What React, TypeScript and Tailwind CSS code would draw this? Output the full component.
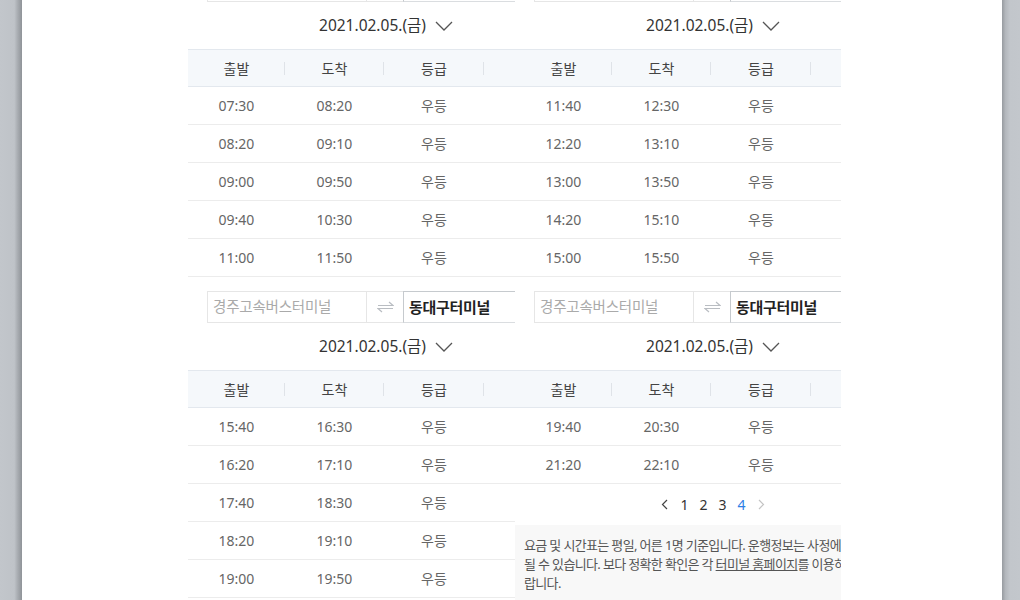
import React from 'react';

type Row = [string, string, string];

interface Section {
  rows: Row[];
  footer?: boolean;
}

const leftSections: Section[] = [
  {
    rows: [
      ['07:30', '08:20', '우등'],
      ['08:20', '09:10', '우등'],
      ['09:00', '09:50', '우등'],
      ['09:40', '10:30', '우등'],
      ['11:00', '11:50', '우등'],
    ],
  },
  {
    rows: [
      ['15:40', '16:30', '우등'],
      ['16:20', '17:10', '우등'],
      ['17:40', '18:30', '우등'],
      ['18:20', '19:10', '우등'],
      ['19:00', '19:50', '우등'],
    ],
  },
];

const rightSections: Section[] = [
  {
    rows: [
      ['11:40', '12:30', '우등'],
      ['12:20', '13:10', '우등'],
      ['13:00', '13:50', '우등'],
      ['14:20', '15:10', '우등'],
      ['15:00', '15:50', '우등'],
    ],
  },
  {
    rows: [
      ['19:40', '20:30', '우등'],
      ['21:20', '22:10', '우등'],
    ],
    footer: true,
  },
];

function SwapIcon() {
  return (
    <svg width="17" height="12" viewBox="0 0 17 12" fill="none" stroke="#b9bdc2" strokeWidth="1.2">
      <path d="M1 4.5h15l-4-3.5" />
      <path d="M16 7.5H1l4 3.5" />
    </svg>
  );
}

function Chevron() {
  return (
    <svg width="18" height="10" viewBox="0 0 18 10" fill="none" stroke="#555" strokeWidth="1.3">
      <path d="M1 1l8 8 8-8" />
    </svg>
  );
}

function SearchRow() {
  return (
    <div className="flex h-[32px] px-[19px]">
      <div className="w-[160px] border border-[#e6e6e6] flex items-center pl-[5px] text-[14.5px] tracking-[-0.2px] text-[#aaaaaa]">
        경주고속버스터미널
      </div>
      <div className="w-[36px] border-y border-[#e6e6e6] flex items-center justify-center">
        <SwapIcon />
      </div>
      <div className="flex-1 border border-[#c6cace] border-b-[#dadde0] flex items-center pl-[5px] text-[15px] tracking-[-0.3px] font-bold text-[#222]">
        동대구터미널
      </div>
    </div>
  );
}

const cols = 'grid grid-cols-[97px_99px_100px_100px]';

function Timetable({ section }: { section: Section }) {
  return (
    <div className="mt-[14px] first:mt-0">
      <SearchRow />
      <div className="h-[47px] flex items-center justify-center gap-[9px]">
        <span className="text-[15.5px] text-[#333]">2021.02.05.(금)</span>
        <Chevron />
      </div>
      <div className={`${cols} h-[38px] bg-[#f5f8fb] border-y border-[#e3e8ee] text-[14px] text-[#444]`}>
        {['출발', '도착', '등급', '요금'].map((h) => (
          <div key={h} className="relative flex items-center justify-center">
            {h}
            <span className="absolute right-0 top-[12px] h-[13px] w-px bg-[#dfe3e8]" />
          </div>
        ))}
      </div>
      {section.rows.map((r, i) => (
        <div key={i} className={`${cols} h-[38px] border-b border-[#ececec] text-[14px] text-[#666]`}>
          <div className="flex items-center justify-center">{r[0]}</div>
          <div className="flex items-center justify-center">{r[1]}</div>
          <div className="flex items-center justify-center">{r[2]}</div>
          <div />
        </div>
      ))}
      {section.footer && (
        <>
          <div className="h-[41px] flex items-center justify-center gap-[11px] text-[14px] text-[#333]">
            <svg width="8" height="11" viewBox="0 0 8 11" fill="none" stroke="#444" strokeWidth="1.2">
              <path d="M6 1L1.5 5.5 6 10" />
            </svg>
            <span>1</span>
            <span>2</span>
            <span>3</span>
            <span className="text-[#2e7fe6]">4</span>
            <svg width="8" height="11" viewBox="0 0 8 11" fill="none" stroke="#c4c4c4" strokeWidth="1.2">
              <path d="M2 1l4.5 4.5L2 10" />
            </svg>
          </div>
          <div className="bg-[#f8f8f8] px-[9px] pt-[11px] pb-[12px] text-[13px] tracking-[-0.65px] leading-[19px] text-[#555] whitespace-nowrap">
            <div>요금 및 시간표는 평일, 어른 1명 기준입니다. 운행정보는 사정에 따라 변경</div>
            <div>
              될 수 있습니다. 보다 정확한 확인은 각 <span className="underline">터미널 홈페이지</span>를 이용하시기 바
            </div>
            <div>랍니다.</div>
          </div>
        </>
      )}
    </div>
  );
}

function Card({ sections, width }: { sections: Section[]; width: string }) {
  return (
    <div className={`${width} shrink-0 overflow-hidden`}>
      <div className="w-[396px]">
        {sections.map((s, i) => (
          <Timetable key={i} section={s} />
        ))}
      </div>
    </div>
  );
}

export default function App() {
  return (
    <div
      className="flex h-[600px] overflow-hidden bg-white"
      style={{ fontFamily: '"Noto Sans", "Noto Sans CJK KR", sans-serif' }}
    >
      <div className="w-[22px] shrink-0 bg-[linear-gradient(to_right,#c2c6cb_0%,#bfc3c8_65%,#a9adb2_80%,#8f9398_100%)]" />
      <div className="flex-1 overflow-hidden">
        <div className="ml-[166px] w-[653px] -mt-[30px] flex overflow-hidden">
          <Card sections={leftSections} width="w-[327px]" />
          <Card sections={rightSections} width="w-[326px]" />
        </div>
      </div>
      <div className="w-[18px] shrink-0 bg-[linear-gradient(to_right,#979ba0_0%,#b4b8bd_20%,#c2c6cb_45%,#c3c7cc_100%)]" />
    </div>
  );
}
